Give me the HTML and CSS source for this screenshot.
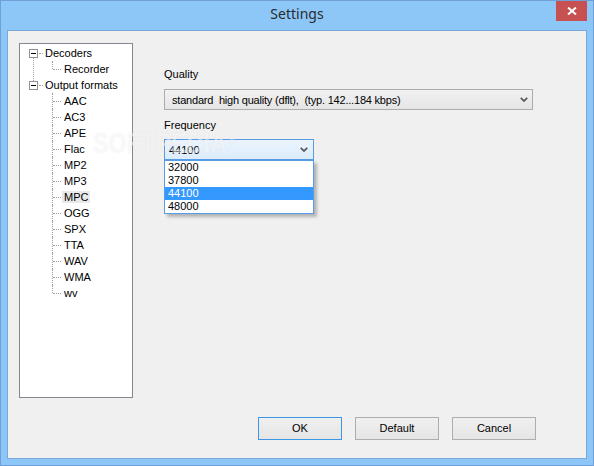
FILE: index.html
```html
<!DOCTYPE html>
<html lang="en">
  <head>
    <meta charset="UTF-8" />
    <title>Settings</title>
    <link rel="stylesheet" href="styles.css">
  </head>
  <body>
    <div class="window">
      <div class="titlebar">
        Settings
        <div class="close">
          <svg width="10" height="8" viewBox="0 0 10 8">
            <path d="M1 0.5 L9 7.5 M9 0.5 L1 7.5" stroke="#fff" stroke-width="2" />
          </svg>
        </div>
      </div>
      <div class="client">
        <div class="content">
          <ul class="tree">
            <li class="node first">
              <div class="row">
                <span class="toggle"></span><span class="stub"></span><span class="label">Decoders</span>
              </div>
              <ul class="children">
                <li><span class="label">Recorder</span></li>
              </ul>
            </li>
            <li class="node">
              <div class="row">
                <span class="toggle"></span><span class="stub"></span><span class="label">Output formats</span>
              </div>
              <ul class="children">
                <li><span class="label">AAC</span></li>
                <li><span class="label">AC3</span></li>
                <li><span class="label">APE</span></li>
                <li><span class="label">Flac</span></li>
                <li><span class="label">MP2</span></li>
                <li><span class="label">MP3</span></li>
                <li><span class="label selected">MPC</span></li>
                <li><span class="label">OGG</span></li>
                <li><span class="label">SPX</span></li>
                <li><span class="label">TTA</span></li>
                <li><span class="label">WAV</span></li>
                <li><span class="label">WMA</span></li>
                <li><span class="label">wv</span></li>
              </ul>
            </li>
          </ul>
          <div class="settings">
            <div class="field-label">Quality</div>
            <div class="combo quality">
              <span class="combo-text">standard&nbsp; high quality (dflt),&nbsp; (typ. 142...184 kbps)</span>
              <svg class="chevron" width="8" height="5" viewBox="0 0 8 5">
                <polyline points="0.8,0.8 4,4 7.2,0.8" fill="none" stroke="#555" stroke-width="1.7" />
              </svg>
            </div>
            <div class="field-label freq-label">Frequency</div>
            <div class="freq-wrap">
              <div class="combo freq open">
                <span class="combo-text">44100</span>
                <svg class="chevron" width="8" height="5" viewBox="0 0 8 5">
                  <polyline points="0.8,0.8 4,4 7.2,0.8" fill="none" stroke="#555" stroke-width="1.7" />
                </svg>
              </div>
              <ul class="dropdown">
                <li>32000</li>
                <li>37800</li>
                <li class="active">44100</li>
                <li>48000</li>
              </ul>
            </div>
          </div>
        </div>
        <div class="buttons">
          <div class="btn default-btn">OK</div>
          <div class="btn">Default</div>
          <div class="btn">Cancel</div>
        </div>
        <div class="watermark">SOFTPEDIA<span class="reg">®</span></div>
      </div>
    </div>
  </body>
</html>
```

FILE: styles.css
```css
body {
  margin: 0;
  padding: 0;
  font-family: "Liberation Sans", Arial, sans-serif;
  font-size: 11px;
  color: #000;
  background-color: #8cc7f8;
}

ul {
  list-style: none;
  margin: 0;
  padding: 0;
}

.window {
  width: 594px;
  height: 466px;
  box-sizing: border-box;
  border: 1px solid #6f9fd6;
  background-color: #8cc7f8;
  display: flex;
  flex-direction: column;
}

.titlebar {
  position: relative;
  height: 29px;
  line-height: 25px;
  text-align: center;
  font-family: "Noto Sans", sans-serif;
  font-size: 14px;
  color: #2b2b2b;
}

.titlebar .close {
  position: absolute;
  left: 555px;
  top: 0;
  width: 31px;
  height: 20px;
  background-color: #c75050;
  display: flex;
  align-items: center;
  justify-content: center;
}

.titlebar .close svg {
  display: block;
}

.client {
  position: relative;
  flex: 1;
  margin: 0 6px 6px 6px;
  border: 1px solid #7aa8dc;
  background-color: #f0f0f0;
  display: flex;
  flex-direction: column;
}

.content {
  display: flex;
  padding: 12px 0 0 11px;
}

/* tree view */

.tree {
  width: 114px;
  height: 355px;
  box-sizing: border-box;
  border: 1px solid #828790;
  background-color: #fff;
  padding-top: 1px;
}

.tree .node {
  position: relative;
}

.tree .node.first::after {
  content: "";
  position: absolute;
  left: 13px;
  top: 13px;
  bottom: -4px;
  border-left: 1px dotted #a0a0a0;
}

.tree .row {
  display: flex;
  align-items: center;
  height: 16px;
}

.tree .toggle {
  position: relative;
  width: 9px;
  height: 9px;
  box-sizing: border-box;
  margin-left: 9px;
  border: 1px solid #919191;
  background-color: #fff;
}

.tree .toggle::after {
  content: "";
  position: absolute;
  left: 1px;
  top: 3px;
  width: 5px;
  height: 1px;
  background-color: #000;
}

.tree .stub {
  width: 4px;
  margin: 0 2px 0 1px;
  border-top: 1px dotted #a0a0a0;
}

.tree .children {
  margin-left: 32px;
}

.tree .children li {
  position: relative;
  height: 16px;
  line-height: 16px;
  padding-left: 12px;
}

.tree .children li::before {
  content: "";
  position: absolute;
  left: 0;
  top: 0;
  bottom: 0;
  border-left: 1px dotted #a0a0a0;
}

.tree .children li:last-child::before {
  bottom: 8px;
}

.tree .children li::after {
  content: "";
  position: absolute;
  left: 1px;
  top: 8px;
  width: 8px;
  border-top: 1px dotted #a0a0a0;
}

.tree .label.selected {
  display: inline-block;
  line-height: 12px;
  padding: 0 2px;
  margin-left: -2px;
  background-color: #e9e9e9;
}

/* settings panel */

.settings {
  margin-left: 31px;
  padding-top: 25px;
}

.field-label {
  line-height: 13px;
  margin-bottom: 8px;
}

.freq-label {
  margin-top: 9px;
  margin-bottom: 7px;
}

.combo {
  display: flex;
  align-items: center;
  justify-content: space-between;
  box-sizing: border-box;
  height: 21px;
  border: 1px solid #acacac;
  background: linear-gradient(#f2f2f2, #e5e5e5);
}

.combo .chevron {
  display: block;
}

.combo.quality {
  width: 369px;
  padding: 0 4px 0 7px;
}

.combo.quality .combo-text {
  letter-spacing: -0.2px;
}

.freq-wrap {
  position: relative;
  width: 150px;
}

.combo.freq {
  width: 150px;
  padding: 0 5px 0 4px;
  border-color: #569de5;
  background: linear-gradient(#ebf4fd, #dcecfc);
}

.dropdown {
  position: absolute;
  left: 0;
  top: 21px;
  width: 150px;
  box-sizing: border-box;
  border: 1px solid #569de5;
  background-color: #fff;
  box-shadow: 3px 3px 3px rgba(0, 0, 0, 0.25);
}

.dropdown li {
  height: 13px;
  line-height: 13px;
  padding-left: 3px;
}

.dropdown li.active {
  background-color: #3399ff;
  color: #fff;
}

/* buttons */

.buttons {
  margin-top: auto;
  display: flex;
  justify-content: flex-end;
  gap: 13px;
  padding: 0 50px 18px 0;
}

.btn {
  width: 84px;
  height: 23px;
  box-sizing: border-box;
  border: 1px solid #adadad;
  background: linear-gradient(#f0f0f0, #e5e5e5);
  line-height: 21px;
  text-align: center;
}

.btn.default-btn {
  border-color: #3d95e6;
}

.watermark {
  position: absolute;
  left: 85px;
  top: 97px;
  font-size: 30px;
  font-weight: bold;
  line-height: 30px;
  color: rgba(255, 255, 255, 0.5);
  text-shadow: 0 0 2px rgba(0, 0, 0, 0.06);
  transform: scaleX(0.78);
  transform-origin: left top;
  pointer-events: none;
}

.watermark .reg {
  font-size: 10px;
  font-weight: normal;
  vertical-align: top;
  margin-left: 3px;
}
```
